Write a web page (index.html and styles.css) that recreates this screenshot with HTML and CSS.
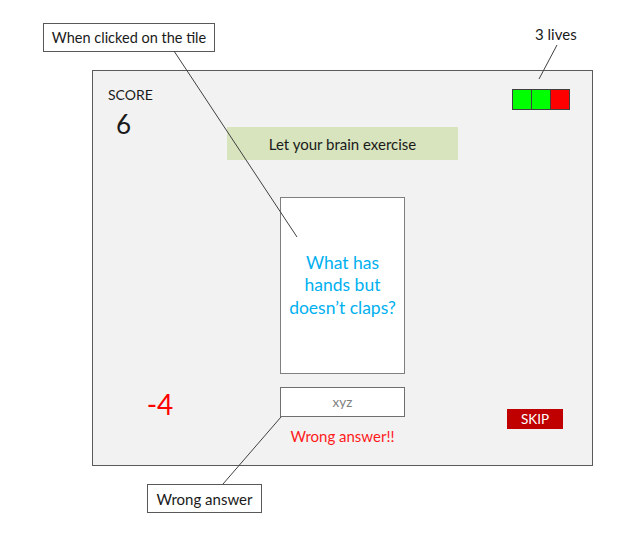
FILE: index.html
```html
<!DOCTYPE html>
<html>
<head>
<meta charset="utf-8">
<link rel="stylesheet" href="styles.css">
</head>
<body>
<div class="page">
  <div class="frame">
    <div class="cell left-top">
      <div class="score-label">SCORE</div>
      <div class="score-value">6</div>
    </div>
    <div class="cell center-top">
      <div class="banner">Let your brain exercise</div>
      <div class="tile">What has<br>hands but<br>doesn’t claps?</div>
    </div>
    <div class="cell right-top">
      <div class="lives">
        <span class="life on"></span><span class="life on"></span><span class="life off"></span>
      </div>
    </div>
    <div class="cell left-bottom">
      <div class="delta">-4</div>
    </div>
    <div class="cell center-bottom">
      <div class="answer">xyz</div>
      <div class="wrong">Wrong answer!!</div>
    </div>
    <div class="cell right-bottom">
      <div class="skip">SKIP</div>
    </div>
  </div>

  <div class="callout callout-tile">When clicked on the tile</div>
  <div class="note note-lives">3 lives</div>
  <div class="callout callout-wrong">Wrong answer</div>

  <svg class="connectors" width="636" height="534" viewBox="0 0 636 534">
    <line x1="174" y1="51" x2="297" y2="237" />
    <line x1="557" y1="45" x2="539" y2="79" />
    <line x1="281" y1="417" x2="223" y2="484" />
  </svg>
</div>
</body>
</html>
```

FILE: styles.css
```css
html, body {
  margin: 0;
  padding: 0;
  background: #ffffff;
}

body {
  font-family: "Lato", "Open Sans", "Liberation Sans", sans-serif;
  color: #1a1a1a;
}

.page {
  position: relative;
  width: 636px;
  height: 534px;
  padding: 70px 0 0 92px;
  box-sizing: border-box;
}

.frame {
  width: 501px;
  height: 396px;
  box-sizing: border-box;
  border: 1px solid #5a5a5a;
  background: #f2f2f2;
  display: grid;
  grid-template-columns: 1fr 231px 1fr;
  grid-template-rows: 316px 1fr;
}

.cell {
  display: flex;
  flex-direction: column;
}

/* left top: score */
.left-top {
  padding: 16px 0 0 15px;
}

.score-label {
  font-size: 14px;
  line-height: 16px;
  color: #1a1a1a;
}

.score-value {
  font-size: 26px;
  line-height: 30px;
  margin: 6px 0 0 8px;
  color: #1a1a1a;
}

/* center top: banner + tile */
.center-top {
  padding-top: 56px;
  align-items: center;
}

.banner {
  width: 231px;
  height: 33px;
  background: #d7e4bd;
  display: flex;
  align-items: center;
  justify-content: center;
  font-size: 15px;
  color: #1a1a1a;
}

.tile {
  margin-top: 37px;
  width: 125px;
  height: 177px;
  box-sizing: border-box;
  background: #ffffff;
  border: 1.5px solid #7f7f7f;
  display: flex;
  align-items: center;
  justify-content: center;
  text-align: center;
  color: #00b0f0;
  font-size: 17.5px;
  line-height: 22.5px;
}

/* right top: lives */
.right-top {
  align-items: flex-end;
  padding: 18px 22px 0 0;
}

.lives {
  display: flex;
  border: 1px solid #404040;
  height: 19px;
}

.life {
  width: 18px;
  height: 19px;
}

.life + .life {
  border-left: 1px solid #404040;
}

.life.on { background: #00ff00; }
.life.off { background: #ff0000; }

/* bottom row */
.left-bottom {
  align-items: center;
  padding-top: 1px;
}

.delta {
  font-size: 28px;
  line-height: 32px;
  color: #ff0000;
}

.center-bottom {
  align-items: center;
}

.answer {
  width: 125px;
  height: 30px;
  box-sizing: border-box;
  border: 1.5px solid #6f6f6f;
  background: #ffffff;
  display: flex;
  align-items: center;
  justify-content: center;
  font-size: 13.5px;
  color: #7f7f7f;
}

.wrong {
  margin-top: 10px;
  font-size: 15px;
  line-height: 18px;
  color: #ff1a1a;
}

.right-bottom {
  align-items: flex-end;
  padding: 22px 29px 0 0;
}

.skip {
  width: 56px;
  height: 20px;
  background: #c00000;
  color: #ffffff;
  font-size: 13.5px;
  display: flex;
  align-items: center;
  justify-content: center;
}

/* annotations */
.callout {
  position: absolute;
  box-sizing: border-box;
  border: 1px solid #595959;
  background: #ffffff;
  font-size: 14.5px;
  color: #1a1a1a;
  display: flex;
  align-items: center;
  justify-content: center;
}

.callout-tile {
  left: 43px;
  top: 23px;
  width: 172px;
  height: 29px;
}

.callout-wrong {
  left: 147px;
  top: 484px;
  width: 115px;
  height: 29px;
  font-size: 15px;
}

.note {
  position: absolute;
  font-size: 15px;
  color: #1a1a1a;
}

.note-lives {
  left: 535px;
  top: 25px;
}

.connectors {
  position: absolute;
  left: 0;
  top: 0;
  pointer-events: none;
}

.connectors line {
  stroke: #404040;
  stroke-width: 1;
}
```
